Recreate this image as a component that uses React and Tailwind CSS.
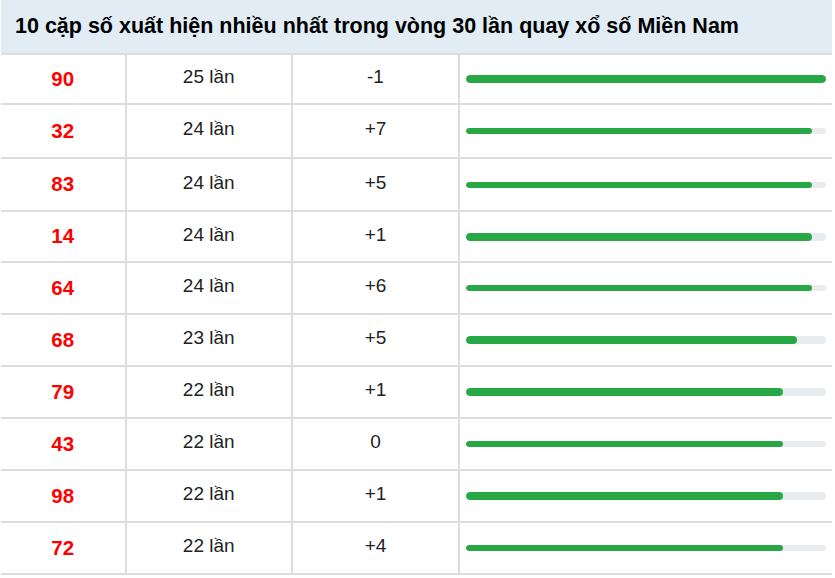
import React from "react";

const rows = [
  { n: "90", c: 25, d: "-1", thick: true, h: "h-[50px]" },
  { n: "32", c: 24, d: "+7", thick: false, h: "h-[54px]" },
  { n: "83", c: 24, d: "+5", thick: false, h: "h-[53px]" },
  { n: "14", c: 24, d: "+1", thick: true, h: "h-[51px]" },
  { n: "64", c: 24, d: "+6", thick: false, h: "h-[52px]" },
  { n: "68", c: 23, d: "+5", thick: true, h: "h-[52px]" },
  { n: "79", c: 22, d: "+1", thick: true, h: "h-[52px]" },
  { n: "43", c: 22, d: "0", thick: false, h: "h-[52px]" },
  { n: "98", c: 22, d: "+1", thick: true, h: "h-[52px]" },
  { n: "72", c: 22, d: "+4", thick: false, h: "h-[52px]" },
];

export default function App() {
  return (
    <div className="w-[835px] h-[578px] bg-white pl-[1px]" style={{ fontFamily: '"Liberation Sans", Arial, sans-serif' }}>
      <div className="w-[831px]">
        <div className="h-[55px] bg-[#e1ecf4] border-b-2 border-[#dddddd] flex items-center pl-[14px]">
          <h2 className="text-[21.5px] font-bold text-black leading-none">
            10 cặp số xuất hiện nhiều nhất trong vòng 30 lần quay xổ số Miền Nam
          </h2>
        </div>
        {rows.map((r) => (
          <div key={r.n} className={`flex border-b-2 border-[#dddddd] ${r.h}`}>
            <div className="w-[125.5px] border-r-2 border-[#dddddd] flex items-center justify-center text-[20.5px] font-bold text-[#ff0000]">
              {r.n}
            </div>
            <div className="w-[166.5px] border-r-2 border-[#dddddd] flex items-center justify-center text-[19px] text-[#222222] pb-[3px]">
              {r.c} lần
            </div>
            <div className="w-[167px] border-r-2 border-[#dddddd] flex items-center justify-center text-[19px] text-[#222222] pb-[3px]">
              {r.d}
            </div>
            <div className="flex-1 flex items-center px-[6px]">
              <div className={`w-full rounded-full bg-[#e9ecef] overflow-hidden ${r.thick ? "h-[8px]" : "h-[6px]"}`}>
                <div
                  className="h-full rounded-full bg-[#28a745]"
                  style={{ width: `${(r.c / 25) * 100}%` }}
                />
              </div>
            </div>
          </div>
        ))}
      </div>
    </div>
  );
}
